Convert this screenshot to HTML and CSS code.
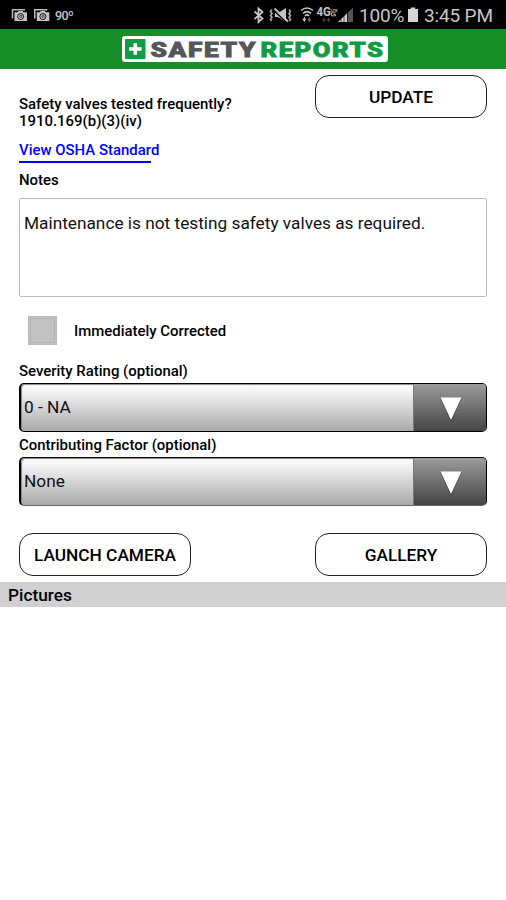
FILE: index.html
```html
<!DOCTYPE html>
<html lang="en">
<head>
<meta charset="utf-8">
<title>Safety Reports</title>
<link rel="stylesheet" href="styles.css">
</head>
<body>
<div class="status">
  <svg class="status-left" width="55" height="30" viewBox="0 0 55 30">
    <g id="cam">
      <path d="M12.500 18.500V9.800H25" fill="none" stroke="#bbb" stroke-width="1.500"/>
      <path d="M14.500 12.300h3l1-1.300h4l1 1.300h3.500V21h-12.500z" fill="#c4c4c4"/>
      <circle cx="20.600" cy="16.500" r="3" fill="#c4c4c4" stroke="#111" stroke-width="1"/>
      <circle cx="20.800" cy="16.300" r="1.100" fill="none" stroke="#222" stroke-width=".8"/>
    </g>
    <use href="#cam" x="22.300"/>
  </svg>
  <span class="temp">90º</span>
  <svg class="status-icons" width="106" height="30" viewBox="250 0 106 30">
    <path d="M254.500 11.500l8 7-4 3.500V8.500l4 3.500-8 7" fill="none" stroke="#c4c4c4" stroke-width="1.800"/>
    <path d="M275 13h3l8-5v14l-8-5h-3z" fill="#c4c4c4"/>
    <path d="M274 10.500l12.500 12" stroke="#000" stroke-width="1.500"/>
    <path d="M274.500 8.500l13.500 13" stroke="#c4c4c4" stroke-width="1.800"/>
    <path d="M272 9.500l-1.500 2 1.500 2-1.500 2 1.500 2-1.500 2 1 1.500M289 9.500l1.500 2-1.500 2 1.500 2-1.500 2 1.500 2-1 1.500" fill="none" stroke="#aaa" stroke-width="1.600"/>
    <g fill="none" stroke="#c4c4c4" stroke-width="1.600"><path d="M301 10.500q6-5 12 0M303 13.300q4-3.500 8 0M305 15.800q2-1.800 4 0"/></g>
    <path d="M302.300 18.800h4l-2 3.200z" fill="#ccc"/><path d="M307.300 20.500l2-3.200 2 3.200z" fill="#777"/><path d="M304.300 17v3" stroke="#ccc"/><path d="M309.300 19v3" stroke="#777"/>
    <text class="net" x="316.500" y="16" textLength="14.500" lengthAdjust="spacingAndGlyphs">4G</text>
    <text class="net-small" x="331" y="11.800">LTE</text><path d="M335.500 12.800h-4v3h4v-1.300h-2" fill="none" stroke="#aaa" stroke-width="1"/>
    <path d="M322 19.500h4l-2 2.800zM326.500 20.500l2-2.800 2 2.800zM323.500 17.500h1v3h-1zM328 19h1v3h-1z" fill="#4a4a4a"/>
    <path d="M353 7.500V22h-15z" fill="#555"/>
    <path d="M347 13.500V22h-9z" fill="#d0d0d0"/>
    <path d="M341 17v5M344 14v8M347.500 11v11" stroke="#000" stroke-width=".6"/>
  </svg>
  <span class="percent">100%</span>
  <svg class="battery" width="10" height="30" viewBox="0 0 10 30"><path d="M0 9h2.800V7.500h4.400V9H10v13H0z" fill="#d6d6d6"/></svg>
  <span class="clock">3:45 PM</span>
</div>
<header class="brand">
  <svg width="266" height="26" viewBox="0 0 266 26">
    <rect width="266" height="26" rx="3" fill="#fff"/>
    <rect x="3" y="3" width="20.500" height="20" rx="1" fill="#109c45"/>
    <path d="M13.300 7.300v11.400M7 13h12.600" stroke="#fff" stroke-width="3.600"/>
    <text class="logo dark" x="28.500" y="20.500" textLength="106.500" lengthAdjust="spacingAndGlyphs">SAFETY</text>
    <text class="logo green" x="138.500" y="20.500" textLength="124" lengthAdjust="spacingAndGlyphs">REPORTS</text>
  </svg>
</header>
<main class="form">
  <section class="top">
    <div>
      <p class="label question">Safety valves tested frequently?<br>1910.169(b)(3)(iv)</p>
      <a class="label link">View OSHA Standard</a>
      <p class="label notes-label">Notes</p>
    </div>
    <button class="button">UPDATE</button>
  </section>
  <div class="notes">Maintenance is not testing safety valves as required.</div>
  <div class="check"><span class="box"></span><span class="label check-label">Immediately Corrected</span></div>
  <p class="label field-label severity">Severity Rating (optional)</p>
  <div class="select"><span class="value">0 - NA</span><span class="arrow"><svg width="24" height="27" viewBox="0 0 24 27"><path d="M1 2h22L12 26z" fill="#333" opacity=".6"/><path d="M1.500 1.500h21L12 24z" fill="#fff"/></svg></span></div>
  <p class="label field-label factor">Contributing Factor (optional)</p>
  <div class="select last"><span class="value">None</span><span class="arrow"><svg width="24" height="27" viewBox="0 0 24 27"><path d="M1 2h22L12 26z" fill="#333" opacity=".6"/><path d="M1.500 1.500h21L12 24z" fill="#fff"/></svg></span></div>
  <div class="actions"><button class="button">LAUNCH CAMERA</button><button class="button">GALLERY</button></div>
</main>
<h2 class="pictures">Pictures</h2>
</body>
</html>
```
FILE: styles.css
```css
* { box-sizing: border-box; }
body { margin: 0; background: #fff; color: #000; font-family: Roboto, sans-serif; }
p, h2 { margin: 0; }
svg { display: block; }
.status { height: 29px; background: #000; color: #c6c6c6; display: flex; align-items: center; white-space: nowrap; overflow: hidden; }
.status-left { flex: none; }
.temp { font-size: 12.5px; font-weight: 500; width: 195px; letter-spacing: -.6px; padding-top: 2px; }
.status-icons { flex: none; }
.percent { font-size: 19px; width: 52px; padding-left: 3px; padding-top: 2px; letter-spacing: -.2px; }
.battery { flex: none; }
.clock { font-size: 19px; padding-left: 6px; padding-top: 2px; letter-spacing: -.15px; }
.net { font: 700 12px Roboto, sans-serif; fill: #c4c4c4; }
.net-small { font: 700 4px Roboto, sans-serif; fill: #c4c4c4; }
.brand { height: 40px; background: #168f28; display: flex; justify-content: center; align-items: center; padding-left: 4px; }
.logo { font-family: Roboto, sans-serif; font-size: 20px; font-weight: 900; letter-spacing: 1.2px; stroke-width: .8px; }
.dark { fill: #54575a; stroke: #54575a; }
.green { fill: #109c45; stroke: #109c45; }
.form { padding: 0 19px; }
.top { height: 129px; display: flex; justify-content: space-between; }
.label { font-size: 14.95px; line-height: 17px; font-weight: 500; white-space: nowrap; }
.question { padding-top: 27px; }
.link { display: block; margin-top: 11px; width: 132px; height: 22px; line-height: 18px; color: #00f; border-bottom: 2px solid #00f; }
.notes-label { margin-top: 9px; }
.button { width: 172px; height: 43px; border: 1px solid #222; border-radius: 14px; background: #fff; color: #000; padding: 0; font: 500 17.3px Roboto, sans-serif; }
.top .button { margin-top: 6px; flex: none; }
.notes { height: 99px; border: 1px solid #bbb; border-radius: 2px; padding: 14px 4px; font-size: 17.25px; line-height: 20px; white-space: nowrap; color: #111; }
.check { display: flex; align-items: center; height: 29px; margin-top: 19px; padding-left: 9px; gap: 17px; }
.check-label { padding-top: 1px; }
.box { width: 29px; height: 29px; background: #c2c2c2; border: 1px solid #b8b8b8; box-shadow: inset 0 0 0 1px #c2c2c2, inset 0 0 0 2px #b4b4b4; }
.severity { margin-top: 18px; }
.factor { margin-top: 5px; }
.select { margin-top: 3px; height: 49px; border: 1px solid #000; border-width: 1px 1px 1px 2px; border-radius: 5px; display: flex; background: linear-gradient(#fff, #f4f4f4 15%, #a9a9a9); overflow: hidden; box-shadow: inset 1px 1px 1px #888; }
.last { border-bottom-color: #666; }
.value { flex: 1; padding-left: 3px; font-size: 17.25px; line-height: 47px; color: #111; }
.arrow { width: 73px; background: linear-gradient(#9b9b9b, #444); display: flex; justify-content: center; align-items: center; border-left: 1px solid #777; padding: 3px 0 0 2px; }
.actions { margin-top: 27px; display: flex; justify-content: space-between; }
.pictures { margin-top: 6px; height: 25px; background: #d0d0d0; padding-left: 8px; font-size: 17.3px; line-height: 26px; font-weight: 500; }
```
